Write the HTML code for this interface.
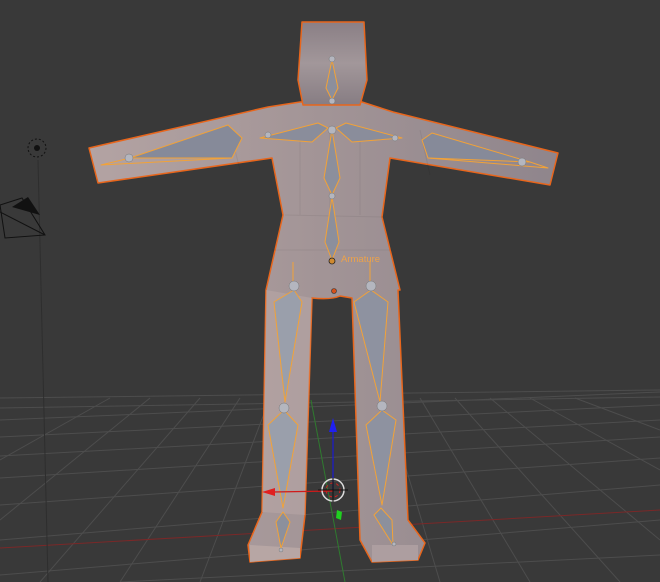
<!DOCTYPE html>
<html><head><style>
html,body{margin:0;padding:0;background:#393939;width:660px;height:582px;overflow:hidden}
svg{display:block}
</style></head><body>
<svg width="660" height="582" viewBox="0 0 660 582" xmlns="http://www.w3.org/2000/svg">
<defs>
<linearGradient id="skin" x1="0" x2="1">
<stop offset="0" stop-color="#b3a3a3"/><stop offset="0.5" stop-color="#a29496"/><stop offset="1" stop-color="#8f858c"/>
</linearGradient>
<linearGradient id="head" x1="0" y1="0" x2="0" y2="1">
<stop offset="0" stop-color="#8a7f85"/><stop offset="0.5" stop-color="#a2979a"/><stop offset="1" stop-color="#877d83"/>
</linearGradient>
</defs>
<rect width="660" height="582" fill="#393939"/>
<g stroke="#4d4d4d" stroke-width="1" fill="none">
<path d="M0 420 L660 392"/><path d="M0 437 L660 405"/><path d="M0 456 L660 420"/><path d="M0 478 L660 437"/><path d="M0 505 L660 458"/><path d="M0 540 L660 485"/><path d="M0 575 L660 520"/><path d="M120 582 L660 555"/>
<path d="M0 398 L660 390"/><path d="M0 408 L660 397"/>
<path d="M40 582 L200 398"/><path d="M120 582 L240 398"/><path d="M200 582 L270 398"/><path d="M0 520 L150 398"/><path d="M0 460 L110 398"/>
<path d="M440 582 L385 398"/><path d="M530 582 L420 398"/><path d="M620 582 L455 398"/><path d="M660 540 L490 398"/><path d="M660 470 L530 398"/><path d="M660 430 L575 398"/>
</g>
<path d="M0 548 L660 510" stroke="#7a2828" stroke-width="1"/>
<path d="M311 400 L345 582" stroke="#2f7a2f" stroke-width="1"/>
<path d="M38 160 L48 582" stroke="#2e2e2e" stroke-width="1"/>
<circle cx="37" cy="148" r="9" fill="none" stroke="#111" stroke-dasharray="2 2"/>
<circle cx="37" cy="148" r="3" fill="#111"/>
<path d="M0 205 L22 198 L45 235 L5 238 Z M0 212 L45 235" fill="none" stroke="#111"/>
<path d="M12 207 L28 197 L40 215 Z" fill="#111"/>
<g stroke="#e8661c" stroke-width="1.5" stroke-linejoin="round">
<path fill="url(#skin)" d="M268 107 L300 102 L362 102 L393 112 L558 153 L550 185 L390 158 L382 217 L400 290 L398 290 L408 520 L425 543 L418 560 L372 562 L360 540 L352 298 L340 296 Q331 300 312 298 L305 515 L300 558 L250 562 L248 545 L262 512 L266 290 L283 215 L272 158 L98 183 L89 148 Z"/>
<path fill="url(#head)" d="M302 22 L364 22 L367 80 L360 105 L303 105 L298 80 Z"/>
</g>
<g fill="none" stroke="#000" stroke-opacity="0.06">
<path d="M300 130 L300 215 M330 130 L330 215 M360 130 L360 215 M285 215 L383 217 M272 250 L392 250 M230 130 L240 170 M420 130 L430 175"/>
</g>
<path d="M266 290 L312 298 L305 515 L262 512 Z" fill="#c6b3ae" opacity="0.35"/>
<path d="M250 545 L300 548 L300 558 L250 562 Z" fill="#b7a6a4"/>
<path d="M372 545 L418 545 L418 560 L372 562 Z" fill="#ad9ea0"/>
<g stroke="#f2a238" stroke-width="1" stroke-linejoin="round">
<path fill="#8c8f9c" d="M332 60 L326 88 L332 100 L338 88 Z"/>
<path fill="#8c8f9c" d="M332 130 L324 178 L332 195 L340 178 Z"/>
<path fill="#8c8f9c" d="M332 197 L325 242 L332 260 L339 242 Z"/>
<path fill="#8a8d9b" d="M328 128 L318 123 L260 138 L312 142 Z"/>
<path fill="#8a8d9b" d="M336 128 L346 123 L402 138 L352 142 Z"/>
<path fill="#868a99" d="M242 138 L228 125 L130 158 L232 158 Z"/>
<path fill="#868a99" d="M422 140 L432 133 L530 162 L428 158 Z"/>
<path fill="none" d="M130 158 L101 165 L232 158 M530 162 L548 168 L428 158"/>
<path fill="#9a9fab" d="M294 290 L274 302 L285 402 L302 302 Z"/>
<path fill="#8e92a0" d="M371 290 L354 302 L380 402 L388 302 Z"/>
<path fill="#9a9fab" d="M284 410 L268 425 L283 508 L298 425 Z"/>
<path fill="#8e92a0" d="M382 410 L366 425 L382 505 L396 420 Z"/>
<path fill="#8c909c" d="M283 512 L276 522 L281 548 L290 522 Z"/>
<path fill="#8c909c" d="M381 508 L374 515 L393 545 L392 520 Z"/>
<path fill="none" d="M293 262 L293 290 M370 262 L370 290"/>
</g>
<g fill="#b4b6bf" stroke="#777" stroke-width="0.5">
<circle cx="332" cy="59" r="3"/><circle cx="332" cy="101" r="3"/><circle cx="332" cy="130" r="4"/><circle cx="332" cy="196" r="3"/>
<circle cx="129" cy="158" r="4"/><circle cx="522" cy="162" r="4"/><circle cx="268" cy="135" r="3"/><circle cx="395" cy="138" r="3"/>
<circle cx="294" cy="286" r="5"/><circle cx="371" cy="286" r="5"/><circle cx="284" cy="408" r="5"/><circle cx="382" cy="406" r="5"/>
<circle cx="281" cy="550" r="2"/><circle cx="394" cy="544" r="2"/>
</g>
<circle cx="332" cy="261" r="3" fill="#d08a30" stroke="#222" stroke-width="0.8"/>
<circle cx="334" cy="291" r="2.5" fill="#d5501a" stroke="#333" stroke-width="0.6"/>
<text x="341" y="262" font-family="Liberation Sans, sans-serif" font-size="9.5" fill="#eda24a">Armature</text>
<path d="M333 491 L333 430" stroke="#1a1ad0" stroke-width="1.2"/>
<path d="M333 418 L329 432 L337 432 Z" fill="#2020f0"/>
<path d="M333 491 L272 492" stroke="#d01a1a" stroke-width="1.2"/>
<path d="M262 492 L275 488 L275 496 Z" fill="#e02020"/>
<path d="M337 510 L342 512 L341 520 L336 518 Z" fill="#20d020"/>
<circle cx="333" cy="490" r="11" fill="none" stroke="#ddd" stroke-width="1.5"/>
<circle cx="333" cy="490" r="7" fill="none" stroke="#d02020" stroke-dasharray="3 3"/>
<path d="M318 490 L348 490 M333 478 L333 502" stroke="#111" stroke-width="1"/>
</svg>
</body></html>
